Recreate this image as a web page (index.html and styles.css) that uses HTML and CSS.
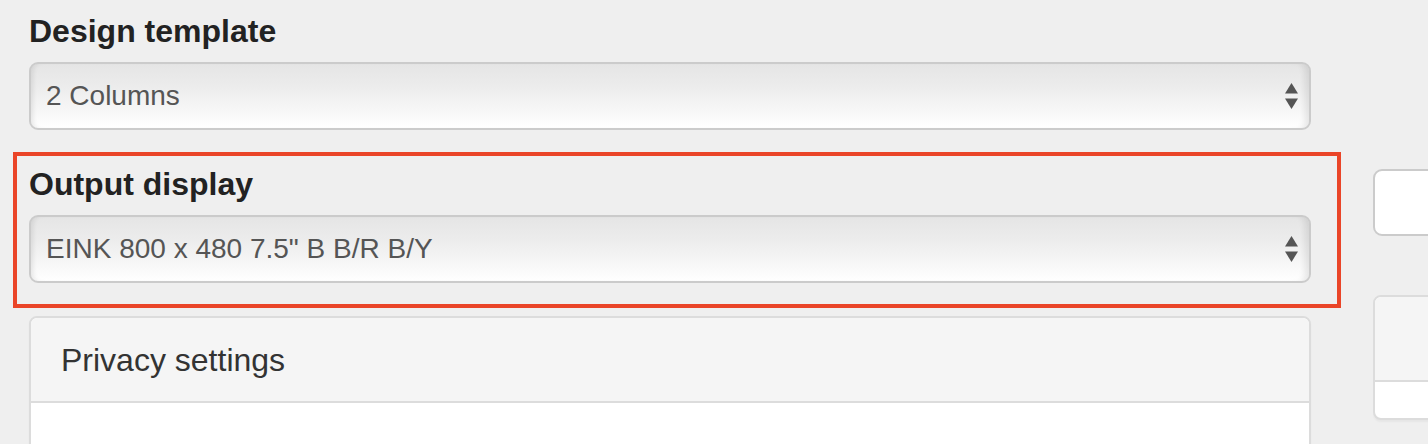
FILE: index.html
```html
<!DOCTYPE html>
<html lang="en">
<head>
<meta charset="utf-8">
<title>Settings</title>
<link rel="stylesheet" href="styles.css">
</head>
<body>
<div class="page">
  <div class="main-col">
    <div class="form-group">
      <div class="label">Design template</div>
      <div class="select">
        <span class="select-text">2 Columns</span>
        <svg class="arrows" width="13" height="26" viewBox="0 0 13 26"><polygon points="6.5,0 13,10.5 0,10.5" fill="#555"/><polygon points="0,15.5 13,15.5 6.5,26" fill="#555"/></svg>
      </div>
    </div>
    <div class="form-group highlight">
      <div class="label">Output display</div>
      <div class="select">
        <span class="select-text">EINK 800 x 480 7.5" B B/R B/Y</span>
        <svg class="arrows" width="13" height="26" viewBox="0 0 13 26"><polygon points="6.5,0 13,10.5 0,10.5" fill="#555"/><polygon points="0,15.5 13,15.5 6.5,26" fill="#555"/></svg>
      </div>
    </div>
    <div class="panel">
      <div class="panel-heading">Privacy settings</div>
      <div class="panel-body"></div>
    </div>
  </div>
  <div class="side-col">
    <div class="side-inner">
      <div class="side-box"></div>
      <div class="panel side-panel">
        <div class="panel-heading"></div>
        <div class="panel-body side-body"></div>
      </div>
    </div>
  </div>
</div>
</body>
</html>
```

FILE: styles.css
```css
html, body {
  margin: 0;
  padding: 0;
  background: #efefef;
  overflow: hidden;
}
body {
  width: 1428px;
  height: 444px;
  font-family: "Liberation Sans", Arial, Helvetica, sans-serif;
}
.page {
  display: flex;
  gap: 62px;
  padding-left: 29px;
  height: 444px;
  overflow: hidden;
}
.main-col {
  width: 1282px;
  flex: none;
}
.side-col {
  flex: 1;
  min-width: 0;
  overflow: hidden;
}
.side-inner {
  width: 300px;
  padding-bottom: 4px;
}
.label {
  font-size: 32px;
  font-weight: bold;
  line-height: 36px;
  height: 36px;
  color: #222;
  margin-bottom: 13px;
}
.form-group:first-child {
  padding-top: 13px;
}
.select {
  box-sizing: border-box;
  height: 68px;
  border: 2px solid #cbcbcb;
  border-radius: 9px;
  background: linear-gradient(#e5e5e5 0%, #ececec 35%, #f6f6f6 70%, #ffffff 100%);
  box-shadow: inset 5px 0 5px -3px rgba(0,0,0,0.09), inset -8px 0 6px -4px rgba(0,0,0,0.09);
  display: flex;
  align-items: center;
  justify-content: space-between;
  padding: 0 11px 0 15px;
}
.select-text {
  font-size: 28px;
  color: #555;
  line-height: 32px;
}
.arrows {
  display: block;
}
.highlight {
  margin: 22px -30px 0 -16px;
  border: 4px solid #ea4528;
  padding: 10px 26px 21px 12px;
}
.panel {
  margin-top: 8px;
  border: 2px solid #dcdcdc;
  border-radius: 8px;
  background: #fff;
  box-shadow: 0 2px 2px rgba(0,0,0,0.04);
}
.panel-heading {
  background: #f5f5f5;
  border-bottom: 2px solid #dcdcdc;
  border-radius: 6px 6px 0 0;
  padding: 24px 30px 23px;
  font-size: 32px;
  line-height: 36px;
  height: 36px;
  color: #333;
}
.panel-body {
  height: 60px;
}
.side-box {
  margin-top: 169px;
  box-sizing: border-box;
  height: 67px;
  background: #fff;
  border: 2px solid #cbcbcb;
  border-radius: 9px;
}
.side-panel {
  margin-top: 59px;
}
.side-body {
  height: 36px;
}
```
